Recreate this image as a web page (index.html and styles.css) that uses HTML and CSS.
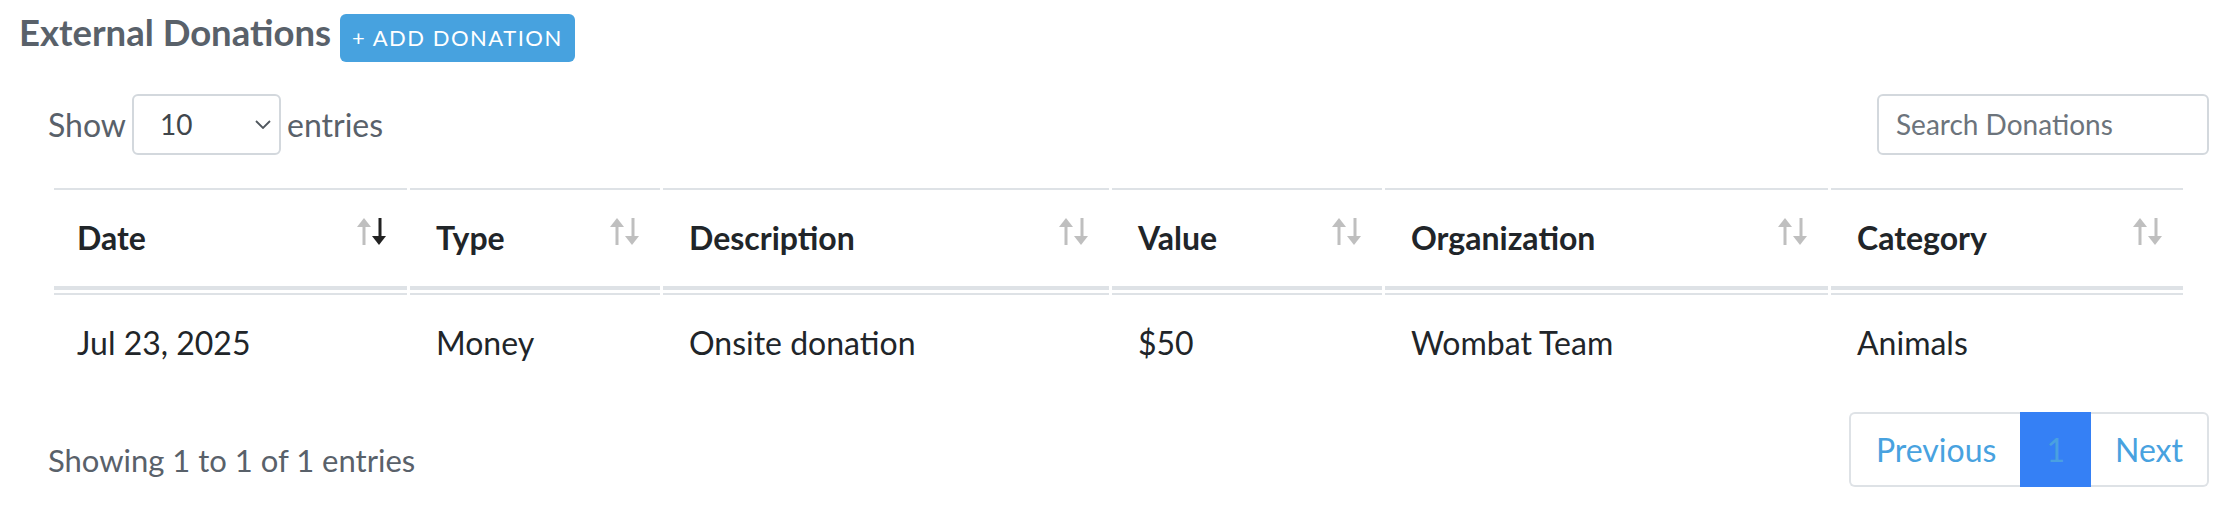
FILE: index.html
```html
<!DOCTYPE html>
<html lang="en">
<head>
<meta charset="utf-8">
<title>External Donations</title>
<link rel="stylesheet" href="styles.css">
</head>
<body>
<div class="page">
  <div class="title-row">
    <h2 class="title">External Donations</h2>
    <button class="btn-add">+ ADD DONATION</button>
  </div>
  <div class="dt">
    <div class="dt-top">
      <div class="dt-length">
        <span>Show</span>
        <div class="select">
          <span class="select-value">10</span>
          <svg class="chevron" width="16" height="9" viewBox="0 0 16 9"><path d="M1 1 L8 8 L15 1" fill="none" stroke="#50575e" stroke-width="1.8"/></svg>
        </div>
        <span>entries</span>
      </div>
      <div class="search">Search Donations</div>
    </div>
    <table class="grid">
      <colgroup>
        <col class="c-date"><col class="c-type"><col class="c-desc"><col class="c-value"><col class="c-org"><col class="c-cat">
      </colgroup>
      <thead>
        <tr>
          <th><div class="th-in"><span>Date</span><svg class="sort" width="30" height="27" viewBox="0 0 30 27"><g class="light"><polygon points="0,9 7,0 14,9"/><rect x="5.5" y="8" width="3" height="19"/></g><g class="dark"><rect x="21.5" y="0" width="3" height="19"/><polygon points="15,18 22,27 29,18"/></g></svg></div></th>
          <th><div class="th-in"><span>Type</span><svg class="sort" width="30" height="27" viewBox="0 0 30 27"><g class="light"><polygon points="0,9 7,0 14,9"/><rect x="5.5" y="8" width="3" height="19"/><rect x="21.5" y="0" width="3" height="19"/><polygon points="15,18 22,27 29,18"/></g></svg></div></th>
          <th><div class="th-in"><span>Description</span><svg class="sort" width="30" height="27" viewBox="0 0 30 27"><g class="light"><polygon points="0,9 7,0 14,9"/><rect x="5.5" y="8" width="3" height="19"/><rect x="21.5" y="0" width="3" height="19"/><polygon points="15,18 22,27 29,18"/></g></svg></div></th>
          <th><div class="th-in"><span>Value</span><svg class="sort" width="30" height="27" viewBox="0 0 30 27"><g class="light"><polygon points="0,9 7,0 14,9"/><rect x="5.5" y="8" width="3" height="19"/><rect x="21.5" y="0" width="3" height="19"/><polygon points="15,18 22,27 29,18"/></g></svg></div></th>
          <th><div class="th-in"><span>Organization</span><svg class="sort" width="30" height="27" viewBox="0 0 30 27"><g class="light"><polygon points="0,9 7,0 14,9"/><rect x="5.5" y="8" width="3" height="19"/><rect x="21.5" y="0" width="3" height="19"/><polygon points="15,18 22,27 29,18"/></g></svg></div></th>
          <th><div class="th-in"><span>Category</span><svg class="sort" width="30" height="27" viewBox="0 0 30 27"><g class="light"><polygon points="0,9 7,0 14,9"/><rect x="5.5" y="8" width="3" height="19"/><rect x="21.5" y="0" width="3" height="19"/><polygon points="15,18 22,27 29,18"/></g></svg></div></th>
        </tr>
      </thead>
      <tbody>
        <tr>
          <td>Jul 23, 2025</td>
          <td>Money</td>
          <td>Onsite donation</td>
          <td>$50</td>
          <td>Wombat Team</td>
          <td>Animals</td>
        </tr>
      </tbody>
    </table>
    <div class="dt-bottom">
      <div class="info">Showing 1 to 1 of 1 entries</div>
      <div class="pagination">
        <span class="page-link first">Previous</span>
        <span class="page-link active">1</span>
        <span class="page-link last">Next</span>
      </div>
    </div>
  </div>
</div>
</body>
</html>
```

FILE: styles.css
```css
* { box-sizing: border-box; }

html, body {
  margin: 0;
  padding: 0;
  background: #ffffff;
}

body {
  font-family: "Lato", "Noto Sans", sans-serif;
  color: #212529;
  width: 2240px;
  height: 524px;
  overflow: hidden;
}

.page {
  padding-top: 11px;
}

.title-row {
  display: flex;
  align-items: baseline;
  gap: 9px;
  padding-left: 19px;
}

.title {
  margin: 0;
  font-size: 36.5px;
  line-height: 43px;
  font-weight: 700;
  color: #59616a;
}

.btn-add {
  display: inline-flex;
  align-items: center;
  height: 48px;
  padding: 0 12px 0 12px;
  border: none;
  border-radius: 6px;
  background: #47a2df;
  color: #ffffff;
  font-family: "Lato", "Noto Sans", sans-serif;
  font-size: 22px;
  line-height: 26px;
  letter-spacing: 1.5px;
  font-weight: 400;
}

.dt {
  padding: 0 31px 0 48px;
}

.dt-top {
  display: flex;
  justify-content: space-between;
  align-items: center;
  margin-top: 31px;
  margin-bottom: 30px;
  height: 62px;
}

.dt-length {
  display: flex;
  align-items: center;
  gap: 6px;
  font-size: 32px;
  color: #59616a;
}

.select {
  display: flex;
  align-items: center;
  justify-content: space-between;
  width: 149px;
  height: 61px;
  padding: 0 8px 0 26px;
  border: 2px solid #d3d8dd;
  border-radius: 6px;
  font-size: 28px;
  color: #40464c;
}

.chevron {
  display: block;
}

.search {
  display: flex;
  align-items: center;
  width: 332px;
  height: 61px;
  padding: 0 17px;
  border: 2px solid #d3d8dd;
  border-radius: 6px;
  font-size: 28px;
  color: #6c747c;
}

.grid {
  table-layout: fixed;
  width: 2135px;
  margin-left: 3px;
  border-collapse: separate;
  border-spacing: 3px;
}

.c-date { width: 353px; }
.c-type { width: 250px; }
.c-desc { width: 446px; }
.c-value { width: 270px; }
.c-org { width: 443px; }
.c-cat { width: 352px; }

.grid th {
  text-align: left;
  font-weight: 700;
  font-size: 32px;
  line-height: 36px;
  padding: 30px 20px 30px 26px;
  border-top: 2px solid #dee2e6;
  border-bottom: 4px solid #dee2e6;
}

.grid th:first-child,
.grid td:first-child {
  padding-left: 23px;
}

.th-in {
  display: flex;
  align-items: center;
  justify-content: space-between;
}

.sort {
  display: block;
  margin-top: -14px;
}

.sort .light { fill: #bfbfbf; }
.sort .dark { fill: #222222; }

.grid td {
  font-size: 32px;
  line-height: 36px;
  padding: 30px 20px 30px 26px;
  border-top: 2px solid #dee2e6;
}

.dt-bottom {
  display: flex;
  justify-content: space-between;
  align-items: flex-start;
  margin-top: 18px;
}

.info {
  padding-top: 30px;
  font-size: 31px;
  line-height: 36px;
  color: #59616a;
}

.pagination {
  display: flex;
  height: 75px;
}

.page-link {
  display: flex;
  align-items: center;
  padding: 0 24px;
  font-size: 32px;
  color: #48a2df;
  border-top: 2px solid #dee2e6;
  border-bottom: 2px solid #dee2e6;
}

.page-link.first {
  border-left: 2px solid #dee2e6;
  border-radius: 6px 0 0 6px;
  padding-left: 25px;
}

.page-link.last {
  border-right: 2px solid #dee2e6;
  border-radius: 0 6px 6px 0;
}

.page-link.active {
  padding: 0 26px;
  background: #3580f5;
  border-color: #3580f5;
  color: #4aa0e0;
}
```
